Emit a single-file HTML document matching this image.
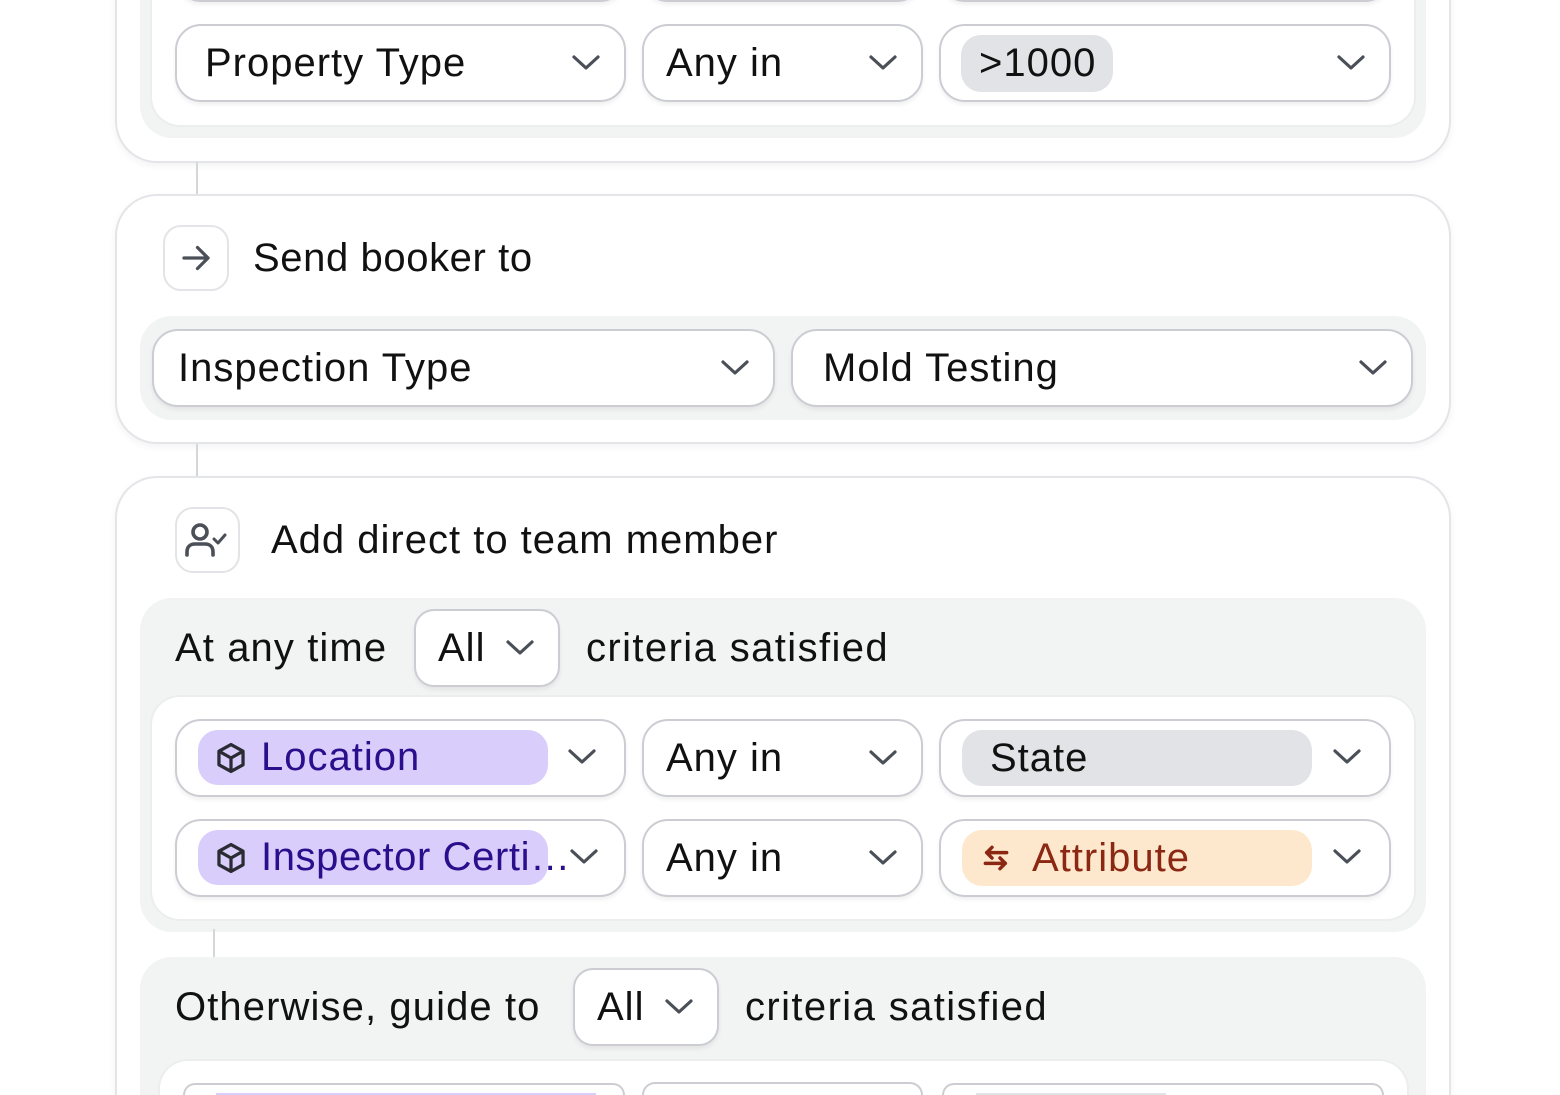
<!DOCTYPE html>
<html><head><meta charset="utf-8">
<style>
*{box-sizing:border-box;margin:0;padding:0}
html,body{width:1560px;height:1095px;overflow:hidden;background:#fff;font-family:"Liberation Sans",sans-serif;color:#111}
#root{position:relative;width:1560px;height:1095px;overflow:hidden}
.a{position:absolute}
.card{position:absolute;background:#fff;border:2px solid #e4e5e8;border-radius:42px;box-shadow:0 3px 8px rgba(0,0,0,.05)}
.gray{position:absolute;background:#f2f3f3;border-radius:32px}
.wbox{position:absolute;background:#fff;border-radius:28px;box-shadow:0 0 0 2px #ecedef}
.dd{position:absolute;background:#fff;border:2px solid #cbcdd3;border-radius:26px;box-shadow:0 3px 4px rgba(0,0,0,.06);display:flex;align-items:center;font-size:40px;letter-spacing:1px;padding-left:28px;white-space:nowrap}
.dd svg.ch{position:absolute;right:24px;top:50%;margin-top:-8px}
.chip{position:absolute;border-radius:20px;display:flex;align-items:center;font-size:40px;letter-spacing:1px;white-space:nowrap}
.chip svg{flex-shrink:0}
.t{position:absolute;font-size:40px;letter-spacing:1.1px;white-space:nowrap;line-height:1}
.line{position:absolute;width:2px;background:#d4d6da}
.ib{position:absolute;border:2px solid #e3e4e7;border-radius:18px;background:#fff;display:flex;align-items:center;justify-content:center}
</style></head><body><div id="root">
<svg width="0" height="0" style="position:absolute"><defs>
<symbol id="chev" viewBox="0 0 28 16"><path d="M2 2 L14 13 L26 2" fill="none" stroke="#4b4f58" stroke-width="3.2" stroke-linecap="round" stroke-linejoin="round"/></symbol>
<symbol id="cube" viewBox="0 0 24 24"><path d="M12 2.5 L20.5 7.2 V16.8 L12 21.5 L3.5 16.8 V7.2 Z M3.8 7.4 L12 12 L20.2 7.4 M12 12 V21.3" fill="none" stroke="#2b2b33" stroke-width="2.3" stroke-linejoin="round"/></symbol>
</defs></svg>

<div class="card" style="left:115px;top:-100px;width:1336px;height:263px"></div>
<div class="gray" style="left:140px;top:-80px;width:1286px;height:218px"></div>
<div class="wbox" style="left:152px;top:-80px;width:1262px;height:205px"></div>
<div class="dd" style="left:175px;top:-76px;width:451px;height:78px"></div>
<div class="dd" style="left:642px;top:-76px;width:281px;height:78px"></div>
<div class="dd" style="left:939px;top:-76px;width:452px;height:78px"></div>
<div class="dd" style="left:175px;top:24px;width:451px;height:78px">Property Type<svg class="ch" width="28" height="16"><use href="#chev"/></svg></div>
<div class="dd" style="left:642px;top:24px;width:281px;height:78px;padding-left:22px">Any in<svg class="ch" width="28" height="16"><use href="#chev"/></svg></div>
<div class="dd" style="left:939px;top:24px;width:452px;height:78px;padding-left:20px"><span style="background:#e2e3e6;border-radius:20px;padding:6px 17px 6px 18px;line-height:45px">&gt;1000</span><svg class="ch" width="28" height="16"><use href="#chev"/></svg></div>

<div class="line" style="left:196px;top:162px;height:33px"></div>

<div class="card" style="left:115px;top:194px;width:1336px;height:250px"></div>
<div class="ib" style="left:163px;top:225px;width:66px;height:66px"><svg width="36" height="36" viewBox="0 0 24 24"><path d="M4 12 H20 M13 5 L20 12 L13 19" fill="none" stroke="#4b4f58" stroke-width="2.2" stroke-linecap="round" stroke-linejoin="round"/></svg></div>
<div class="t" style="left:253px;top:238px;letter-spacing:0.6px">Send booker to</div>
<div class="gray" style="left:140px;top:316px;width:1286px;height:104px"></div>
<div class="dd" style="left:152px;top:329px;width:623px;height:78px;padding-left:24px">Inspection Type<svg class="ch" width="28" height="16"><use href="#chev"/></svg></div>
<div class="dd" style="left:791px;top:329px;width:622px;height:78px;padding-left:30px">Mold Testing<svg class="ch" width="28" height="16"><use href="#chev"/></svg></div>

<div class="line" style="left:196px;top:444px;height:33px"></div>

<div class="card" style="left:115px;top:476px;width:1336px;height:619px;border-bottom:none;border-bottom-left-radius:0;border-bottom-right-radius:0"></div>
<div class="ib" style="left:175px;top:507px;width:65px;height:66px"><svg width="50" height="42" viewBox="0 0 50 42"><circle cx="17" cy="13" r="7" fill="none" stroke="#4b4f58" stroke-width="3.6"/><path d="M4 36 V33 C4 28 7 25 12 25 H22 C27 25 30 28 30 33 V36" fill="none" stroke="#4b4f58" stroke-width="3.6" stroke-linecap="round"/><path d="M31 20 L35 24 L42 16" fill="none" stroke="#4b4f58" stroke-width="3" stroke-linecap="round" stroke-linejoin="round"/></svg></div>
<div class="t" style="left:271px;top:520px;letter-spacing:1px">Add direct to team member</div>

<div class="gray" style="left:140px;top:598px;width:1286px;height:334px"></div>
<div class="t" style="left:175px;top:628px">At any time</div>
<div class="dd" style="left:414px;top:609px;width:146px;height:78px;padding-left:22px;border-radius:20px">All<svg class="ch" width="28" height="16" style="right:24px"><use href="#chev"/></svg></div>
<div class="t" style="left:586px;top:628px;letter-spacing:1.4px">criteria satisfied</div>
<div class="wbox" style="left:152px;top:697px;width:1262px;height:222px"></div>
<div class="dd" style="left:175px;top:719px;width:451px;height:78px;padding-left:0"></div>
<div class="chip" style="left:198px;top:730px;width:350px;height:55px;background:#d8cdfb;color:#2a0e8c;padding-left:16px"><svg width="34" height="34"><use href="#cube"/></svg><span style="margin-left:13px">Location</span></div>
<svg class="a" style="left:568px;top:749px" width="28" height="16"><use href="#chev"/></svg>
<div class="dd" style="left:642px;top:719px;width:281px;height:78px;padding-left:22px">Any in<svg class="ch" width="28" height="16"><use href="#chev"/></svg></div>
<div class="dd" style="left:939px;top:719px;width:452px;height:78px"></div>
<div class="chip" style="left:962px;top:730px;width:350px;height:56px;background:#e2e3e6;padding-left:28px">State</div>
<svg class="a" style="left:1333px;top:749px" width="28" height="16"><use href="#chev"/></svg>

<div class="dd" style="left:175px;top:819px;width:451px;height:78px;padding-left:0"></div>
<div class="chip" style="left:198px;top:830px;width:350px;height:55px;background:#d8cdfb;color:#2a0e8c;padding-left:16px"><svg width="34" height="34"><use href="#cube"/></svg><span style="margin-left:13px;letter-spacing:0.6px">Inspector Certi…</span></div>
<svg class="a" style="left:570px;top:849px" width="28" height="16"><use href="#chev"/></svg>
<div class="dd" style="left:642px;top:819px;width:281px;height:78px;padding-left:22px">Any in<svg class="ch" width="28" height="16"><use href="#chev"/></svg></div>
<div class="dd" style="left:939px;top:819px;width:452px;height:78px"></div>
<div class="chip" style="left:962px;top:830px;width:350px;height:56px;background:#fde8cd;color:#8b2712;padding-left:18px"><svg width="32" height="32" viewBox="0 0 24 24"><path d="M20 8 H5 M9 4 L5 8 L9 12 M4 16 H19 M15 12 L19 16 L15 20" fill="none" stroke="#8b2712" stroke-width="2.6" stroke-linecap="round" stroke-linejoin="round"/></svg><span style="margin-left:20px">Attribute</span></div>
<svg class="a" style="left:1333px;top:849px" width="28" height="16"><use href="#chev"/></svg>

<div class="line" style="left:213px;top:929px;height:28px"></div>

<div class="gray" style="left:140px;top:957px;width:1286px;height:138px;border-bottom-left-radius:0;border-bottom-right-radius:0"></div>
<div class="t" style="left:175px;top:987px">Otherwise, guide to</div>
<div class="dd" style="left:573px;top:968px;width:146px;height:78px;padding-left:22px;border-radius:20px">All<svg class="ch" width="28" height="16"><use href="#chev"/></svg></div>
<div class="t" style="left:745px;top:987px;letter-spacing:1.4px">criteria satisfied</div>
<div class="wbox" style="left:160px;top:1061px;width:1247px;height:34px;border-bottom-left-radius:0;border-bottom-right-radius:0"></div>
<div class="dd" style="left:183px;top:1083px;width:442px;height:12px;border-bottom:none;border-radius:22px 22px 0 0;box-shadow:none"></div>
<div class="a" style="left:216px;top:1093px;width:380px;height:2px;background:#d8cdfb"></div>
<div class="dd" style="left:642px;top:1082px;width:281px;height:13px;border-bottom:none;border-radius:22px 22px 0 0;box-shadow:none"></div>
<div class="dd" style="left:942px;top:1083px;width:442px;height:12px;border-bottom:none;border-radius:22px 22px 0 0;box-shadow:none"></div>
<div class="a" style="left:976px;top:1093px;width:190px;height:2px;background:#e2e3e6"></div>
</div></body></html>
